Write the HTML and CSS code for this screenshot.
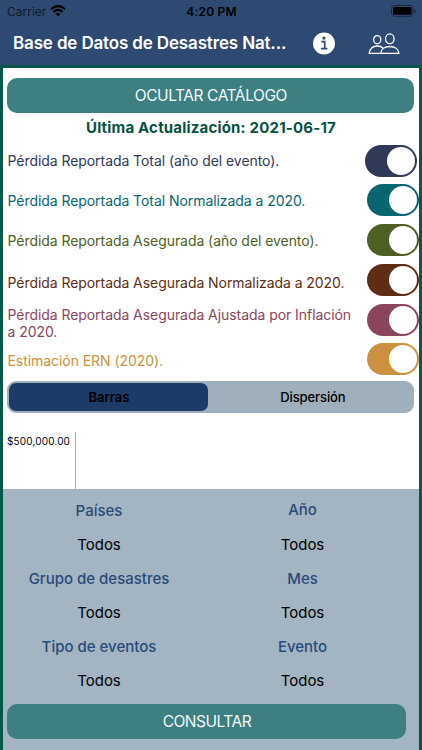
FILE: index.html
```html
<!DOCTYPE html>
<html lang="es">
<head>
<meta charset="utf-8">
<meta name="viewport" content="width=device-width, initial-scale=1">
<title>Base de Datos de Desastres Naturales</title>
<link rel="stylesheet" href="styles.css">
</head>
<body>
<header class="header">
  <div class="status">
    <div class="carrier"><span>Carrier</span>
      <svg width="16" height="12" viewBox="0 0 16 12" fill="none" stroke="#000" stroke-width="2.1"><path d="M.9 4.3Q8-2.2 15.1 4.3M3.4 6.9Q8 2.8 12.6 6.9"/><path d="M5.4 8.8Q8 6.6 10.6 8.8L8 11.5Z" fill="#000" stroke="none"/></svg>
    </div>
    <span class="time">4:20 PM</span>
    <svg class="battery" width="25" height="12" viewBox="0 0 25 12"><rect x=".5" y=".5" width="21.5" height="10.8" rx="3" fill="none" stroke="#172741"/><rect x="2" y="2" width="18.5" height="7.8" rx="1.6"/><path d="M23.2 4v4q1.5-.6 1.5-2t-1.5-2" fill="#172741"/></svg>
  </div>
  <div class="nav">
    <h1>Base de Datos de Desastres Nat...</h1>
    <svg class="info" width="22" height="23" viewBox="0 0 22 23"><circle cx="11" cy="11.5" r="11" fill="#fff"/><circle cx="10.9" cy="6.1" r="1.6" fill="#2e4a72"/><path d="M8.3 9.7h3.4v6.6M7.9 16.7h6.5" fill="none" stroke="#2e4a72" stroke-width="1.7"/></svg>
    <svg class="people" width="32" height="22" viewBox="0 0 32 22" fill="none" stroke="#fff" stroke-width="1.3"><ellipse cx="9.2" cy="6.7" rx="3.6" ry="4.1"/><ellipse cx="21.8" cy="5.8" rx="4.3" ry="4.9"/><path d="M12.7 20.4C12.9 16.3 16.5 13.5 21.8 13.5s8.9 2.8 9.1 6.9ZM12.1 20.4H1.3c.2-4.3 3.4-7.4 7.9-7.4 2.5 0 4.5.7 5.9 2.1"/></svg>
  </div>
</header>
<main class="main">
  <button class="button catalog">OCULTAR CATÁLOGO</button>
  <h2>Última Actualización: 2021-06-17</h2>
  <section class="series">
    <div class="labels">
      <p class="navy">Pérdida Reportada Total (año del evento).</p>
      <p class="teal">Pérdida Reportada Total Normalizada a 2020.</p>
      <p class="olive">Pérdida Reportada Asegurada (año del evento).</p>
      <p class="brown">Pérdida Reportada Asegurada Normalizada a 2020.</p>
      <p class="wine">Pérdida Reportada Asegurada Ajustada por Inflación<br>a 2020.</p>
      <p class="gold">Estimación ERN (2020).</p>
    </div>
    <div class="toggles">
      <i class="toggle navy"></i><i class="toggle teal"></i><i class="toggle olive"></i><i class="toggle brown"></i><i class="toggle wine"></i><i class="toggle gold"></i>
    </div>
  </section>
  <div class="segments"><span class="selected">Barras</span><span class="other">Dispersión</span></div>
  <div class="chart"><span>$500,000.00</span></div>
  <section class="filters">
    <div class="grid">
      <b>Países</b><b class="year">Año</b>
      <span>Todos</span><span>Todos</span>
      <b>Grupo de desastres</b><b>Mes</b>
      <span>Todos</span><span>Todos</span>
      <b>Tipo de eventos</b><b>Evento</b>
      <span>Todos</span><span>Todos</span>
    </div>
    <button class="button query">CONSULTAR</button>
  </section>
</main>
</body>
</html>
```
FILE: styles.css
```css
* { box-sizing: border-box; margin: 0; padding: 0; }
body { width: 422px; height: 750px; overflow: hidden; font-family: Inter, "Liberation Sans", sans-serif; color: #000; background: #fff; }
svg { display: block; flex: none; }
.header { height: 65px; background: #2e4a72; }
.status { height: 22px; display: grid; grid-template-columns: 1fr auto 1fr; align-items: center; padding: 0 6px 0 7px; font-size: 12px; }
.carrier { display: flex; align-items: center; gap: 4px; color: #10192a; letter-spacing: 0; }
.time { font-weight: 600; font-size: 12px; letter-spacing: .2px; }
.battery { justify-self: end; }
.nav { height: 43px; display: flex; align-items: center; padding-left: 13px; color: #fff; }
h1 { width: 300px; font-size: 17px; line-height: 22px; font-weight: 600; letter-spacing: -.15px; white-space: nowrap; }
.nav h1 { margin-top: -1px; }
.people { margin-left: 33px; }
.main { height: 685px; border: 3px solid #07574b; border-bottom: 0; }
.button { display: block; border: 0; border-radius: 10px; background: #3e7f82; color: #f1fafa; font: 400 15.5px/35px Inter, sans-serif; letter-spacing: -.5px; text-align: center; }
.catalog { width: 407px; height: 35px; margin: 9.5px 0 0 4.4px; letter-spacing: -.42px; }
h2 { height: 31px; margin-top: .5px; text-align: center; font-size: 15px; line-height: 30px; font-weight: 700; letter-spacing: .19px; color: #07513f; white-space: nowrap; }
.series { display: flex; justify-content: space-between; height: 237px; }
.labels { padding-left: 4.5px; font-size: 14px; letter-spacing: -.06px; white-space: nowrap; }
.labels p { height: 40px; line-height: 33px; }
.labels .brown { height: 34px; line-height: 37px; }
.labels .wine { height: 44px; line-height: 17px; padding-top: 8px; }
.labels .gold { height: 34px; line-height: 37px; }
.toggles { width: 53px; display: flex; flex-direction: column; gap: 7.8px; padding-top: .5px; }
.toggle { display: flex; justify-content: flex-end; width: 52px; height: 32px; padding: 2px; border-radius: 16px; background: currentColor; margin-left: .5px; flex: none; }
.toggle:first-child { margin-left: -1.5px; }
.toggle::after { content: ""; width: 28px; height: 28px; border-radius: 50%; background: #fff; }
.navy { color: #303a57; }
.teal { color: #08666f; }
.olive { color: #4e6024; }
.brown { color: #5e2d14; }
.wine { color: #8b465c; }
.gold { color: #cc913e; }
.segments { display: flex; width: 407px; height: 32px; margin-left: 4.4px; padding: 2px; border-radius: 9px; background: #9fafbb; font-size: 13px; font-weight: 500; line-height: 28px; text-align: center; }
.segments span { flex: 1; }
.segments .selected { flex: 0 0 199px; border-radius: 7px; background: #1c3b69; font-weight: 600; }
.segments .other { padding-left: 5px; letter-spacing: -.1px; }
.chart { height: 76px; padding: 19px 0 0 4px; font-size: 10px; line-height: 18px; letter-spacing: .15px; }
.chart span { display: block; width: 69px; height: 57px; border-right: 1px solid #aaa; }
.filters { height: 261px; background: #a3b4c2; }
.grid { display: grid; grid-template-columns: 192px 215px; grid-auto-rows: 34.1px; padding-top: 5px; text-align: center; font-size: 15px; line-height: 34px; }
.grid b { font-weight: 500; color: #294a7a; }
.grid .year { position: relative; top: -1px; }
.query { width: 399px; height: 35px; margin: 5.5px 0 0 4.4px; }
```
